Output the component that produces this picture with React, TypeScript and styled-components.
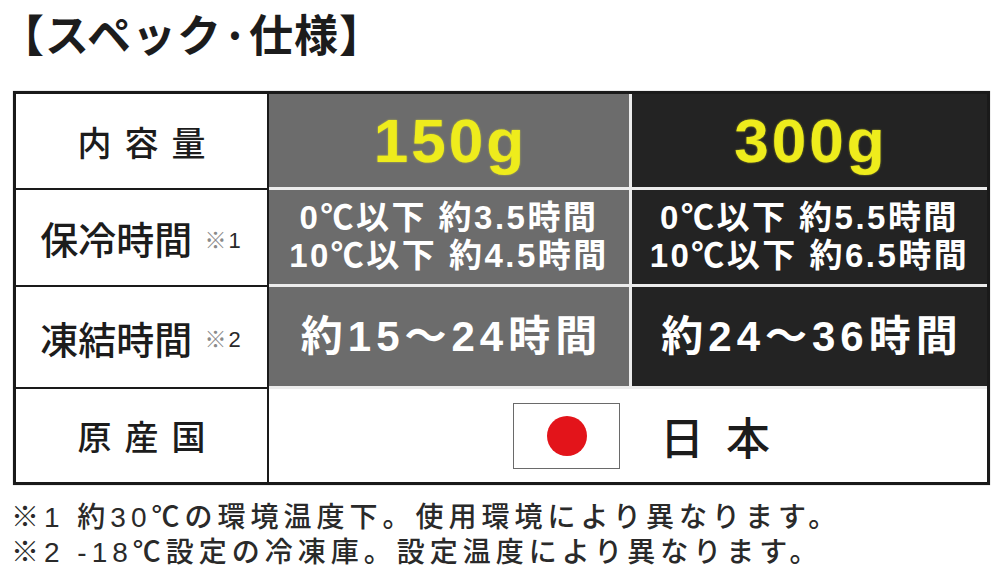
import React from "react";
import styled, { createGlobalStyle } from "styled-components";

const Global = createGlobalStyle`
  html, body { margin: 0; padding: 0; background: #fff; }
  body { font-family: "Liberation Sans", "Noto Sans CJK JP", sans-serif; color: #1c1c1c; }
`;

const Page = styled.div`
  width: 999px;
  height: 583px;
  overflow: hidden;
  background: #fff;
`;

const Title = styled.h1`
  margin: 2px 0 0 0;
  padding: 0;
  font-family: "Noto Sans CJK JP", sans-serif;
  font-size: 44px;
  line-height: 62px;
  font-weight: 700;
  color: #1c1c1c;
  letter-spacing: 1px;
  white-space: nowrap;
`;

const Table = styled.div`
  margin: 27px 0 0 13px;
  width: 977px;
  box-sizing: border-box;
  border: 3px solid #1a1a1a;
  display: grid;
  grid-template-columns: 253px 363px 1fr;
  grid-template-rows: 96px 97px 102px 93px;
  box-shadow: 0 0 1px rgba(0,0,0,0.4);
`;

const LabelCell = styled.div<{ $last?: boolean; $spaced?: boolean }>`
  box-sizing: border-box;
  border-right: 2px solid #1a1a1a;
  border-bottom: ${(p) => (p.$last ? "none" : "2px solid #1a1a1a")};
  display: flex;
  align-items: center;
  justify-content: center;
  font-family: "Noto Sans CJK JP", sans-serif;
  font-weight: 500;
  font-size: ${(p) => (p.$spaced ? "34px" : "38px")};
  letter-spacing: ${(p) => (p.$spaced ? "13px" : "0")};
  padding-left: ${(p) => (p.$spaced ? "13px" : "0")};
  color: #1c1c1c;
  background: #fff;
`;

const Note = styled.span`
  font-family: "Liberation Sans", "Noto Sans CJK JP", sans-serif;
  font-size: 22px;
  margin-left: 12px;
  letter-spacing: 2px;
  color: #2a2a2a;
`;

const NoteMark = styled.span`
  color: #8a8a8a;
  font-family: "Noto Sans CJK JP", sans-serif;
`;

const ValueCell = styled.div<{ $dark?: boolean; $lastCol?: boolean }>`
  box-sizing: border-box;
  background: ${(p) => (p.$dark ? "#232323" : "#6c6c6c")};
  border-bottom: 3px solid #ececec;
  border-right: ${(p) => (p.$lastCol ? "none" : "3px solid #ececec")};
  display: flex;
  flex-direction: column;
  align-items: center;
  justify-content: center;
  color: #fff;
  font-family: "Liberation Sans", "Noto Sans CJK JP", sans-serif;
`;

const Weight = styled.div`
  font-family: "Liberation Sans", sans-serif;
  font-weight: 700;
  font-size: 62px;
  letter-spacing: 3px;
  padding-left: 3px;
  color: #eeec1c;
  text-shadow: 0 0 2px rgba(240, 240, 40, 0.7);
  line-height: 1;
`;

const TimeLine = styled.div`
  font-size: 33px;
  font-weight: 700;
  line-height: 38px;
  white-space: nowrap;
  letter-spacing: 2.5px;
`;

const Freeze = styled.div`
  font-size: 42px;
  font-weight: 700;
  letter-spacing: 5px;
  padding-left: 5px;
  white-space: nowrap;
  line-height: 1;
`;

const OriginCell = styled.div`
  grid-column: 2 / 4;
  background: #fff;
  display: flex;
  align-items: center;
  padding-left: 244px;
  gap: 40px;
`;

const Flag = styled.div`
  width: 107px;
  height: 66px;
  box-sizing: border-box;
  border: 1.5px solid #6a6a6a;
  background: #fff;
  display: flex;
  align-items: center;
  justify-content: center;
`;

const Sun = styled.div`
  width: 40px;
  height: 40px;
  border-radius: 50%;
  background: #e3141a;
`;

const Country = styled.div`
  font-family: "Noto Sans CJK JP", sans-serif;
  font-size: 44px;
  font-weight: 500;
  letter-spacing: 22px;
  color: #1c1c1c;
`;

const Footnotes = styled.div`
  margin: 15px 0 0 11px;
  font-family: "Liberation Sans", "Noto Sans CJK JP", sans-serif;
  font-size: 28px;
  line-height: 35px;
  font-weight: 500;
  color: #2a2a2a;
  letter-spacing: 5px;
`;

const FootLine = styled.div`
  white-space: nowrap;
`;

export default function App() {
  return (
    <Page>
      <Global />
      <Title>【スペック·仕様】</Title>
      <Table>
        <LabelCell $spaced>内容量</LabelCell>
        <ValueCell>
          <Weight>150g</Weight>
        </ValueCell>
        <ValueCell $dark $lastCol>
          <Weight>300g</Weight>
        </ValueCell>

        <LabelCell>
          保冷時間
          <Note>
            <NoteMark>※</NoteMark>1
          </Note>
        </LabelCell>
        <ValueCell>
          <TimeLine>0℃以下 約3.5時間</TimeLine>
          <TimeLine>10℃以下 約4.5時間</TimeLine>
        </ValueCell>
        <ValueCell $dark $lastCol>
          <TimeLine>0℃以下 約5.5時間</TimeLine>
          <TimeLine>10℃以下 約6.5時間</TimeLine>
        </ValueCell>

        <LabelCell>
          凍結時間
          <Note>
            <NoteMark>※</NoteMark>2
          </Note>
        </LabelCell>
        <ValueCell>
          <Freeze>約15～24時間</Freeze>
        </ValueCell>
        <ValueCell $dark $lastCol>
          <Freeze>約24～36時間</Freeze>
        </ValueCell>

        <LabelCell $spaced $last>原産国</LabelCell>
        <OriginCell>
          <Flag>
            <Sun />
          </Flag>
          <Country>日本</Country>
        </OriginCell>
      </Table>
      <Footnotes>
        <FootLine>※1 約30℃の環境温度下。使用環境により異なります。</FootLine>
        <FootLine>※2 -18℃設定の冷凍庫。設定温度により異なります。</FootLine>
      </Footnotes>
    </Page>
  );
}
